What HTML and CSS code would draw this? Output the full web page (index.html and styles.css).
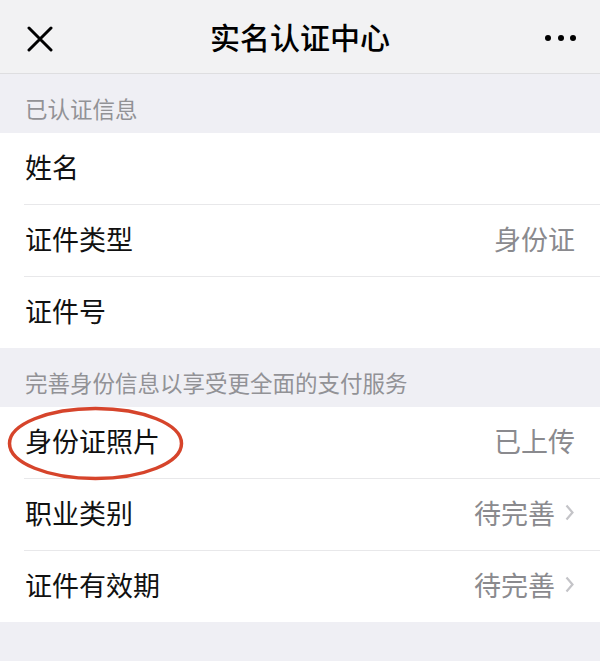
FILE: index.html
```html
<!DOCTYPE html>
<html lang="zh-CN">
<head>
<meta charset="utf-8">
<title>实名认证中心</title>
<link rel="stylesheet" href="styles.css">
</head>
<body>
<header class="navbar">
  <svg class="nav-close" width="26" height="26" viewBox="0 0 26 26"><path d="M2 2 L24 24 M24 2 L2 24" stroke="#000" stroke-width="3" stroke-linecap="round"/></svg>
  <div class="nav-title">实名认证中心</div>
  <div class="nav-more"><span></span><span></span><span></span></div>
</header>

<div class="section-title">已认证信息</div>
<div class="group">
  <div class="row"><span class="label">姓名</span></div>
  <div class="row"><span class="label">证件类型</span><span class="value">身份证</span></div>
  <div class="row"><span class="label">证件号</span></div>
</div>

<div class="section-title">完善身份信息以享受更全面的支付服务</div>
<div class="group">
  <div class="row row-marked">
    <span class="label">身份证照片</span><span class="value">已上传</span>
    <svg class="mark" width="200" height="80" viewBox="0 0 200 80"><ellipse cx="95.5" cy="36.5" rx="86" ry="35" fill="none" stroke="#d6442b" stroke-width="3.5"/></svg>
  </div>
  <div class="row"><span class="label">职业类别</span><span class="value">待完善</span><svg class="chev" width="9" height="17" viewBox="0 0 9 17"><path d="M1.5 1.5 L7.5 8.5 L1.5 15.5" fill="none" stroke="#c4c4c8" stroke-width="2.2"/></svg></div>
  <div class="row"><span class="label">证件有效期</span><span class="value">待完善</span><svg class="chev" width="9" height="17" viewBox="0 0 9 17"><path d="M1.5 1.5 L7.5 8.5 L1.5 15.5" fill="none" stroke="#c4c4c8" stroke-width="2.2"/></svg></div>
</div>
</body>
</html>
```

FILE: styles.css
```css
html, body {
  margin: 0;
  padding: 0;
}
body {
  background: #efeff4;
  font-family: "Noto Sans CJK SC", "Noto Sans", sans-serif;
  width: 600px;
  min-height: 661px;
}
.navbar {
  height: 73px;
  background: #f2f2f3;
  border-bottom: 1px solid #dedee0;
  display: flex;
  align-items: center;
  justify-content: space-between;
  padding: 0 24px 0 27px;
  position: relative;
}
.nav-close {
  display: block;
  margin-top: 4px;
}
.nav-title {
  position: absolute;
  left: 0;
  right: 0;
  text-align: center;
  font-size: 30px;
  font-weight: 500;
  color: #000;
  line-height: 73px;
  pointer-events: none;
}
.nav-more {
  display: flex;
  gap: 6.5px;
  margin-top: 2px;
}
.nav-more span {
  width: 6px;
  height: 6px;
  border-radius: 50%;
  background: #000;
}
.section-title {
  height: 50px;
  padding-top: 9px;
  display: flex;
  align-items: center;
  padding-left: 25px;
  font-size: 22.5px;
  color: #929296;
}
.group {
  background: #fff;
}
.row {
  height: 66px;
  padding-bottom: 5px;
  margin-left: 24px;
  padding-right: 25px;
  display: flex;
  align-items: center;
  border-bottom: 1px solid #e8e8ea;
  position: relative;
}
.row:last-child {
  border-bottom: none;
}
.label {
  flex: 1;
  font-size: 27px;
  color: #111;
  padding-left: 1px;
}
.value {
  font-size: 27px;
  color: #8a8a8e;
}
.chev {
  display: block;
  margin-left: 10px;
  margin-right: 1px;
}
.mark {
  position: absolute;
  left: -24px;
  top: 0;
  overflow: visible;
  pointer-events: none;
}
```
